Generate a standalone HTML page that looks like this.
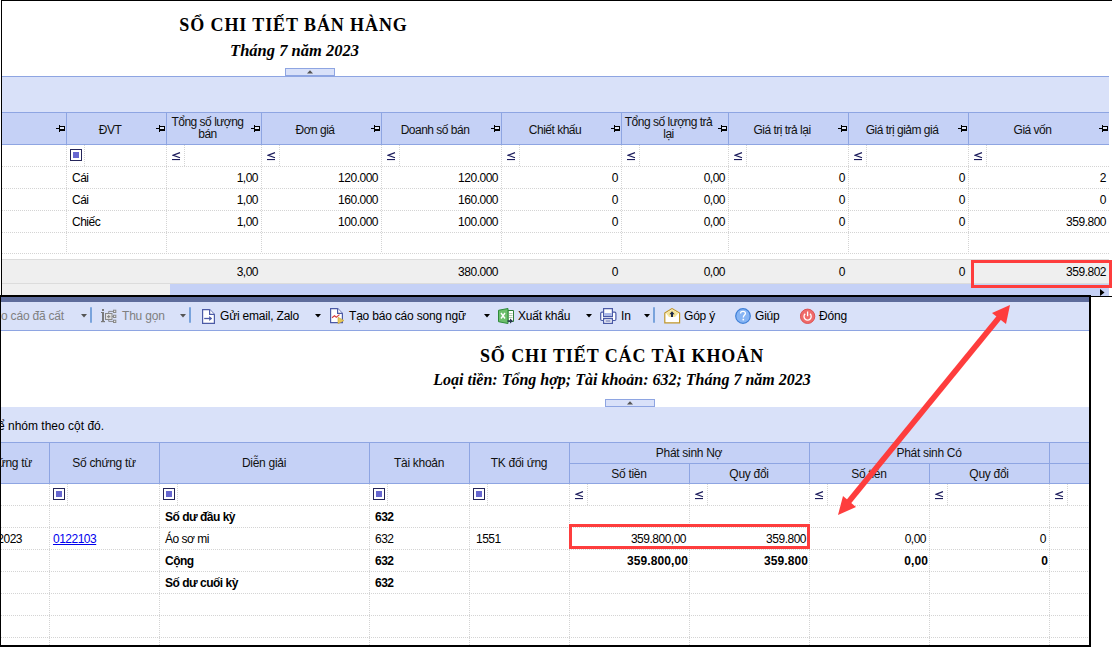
<!DOCTYPE html><html><head><meta charset="utf-8"><style>
html,body{margin:0;padding:0;}body{width:1112px;height:647px;position:relative;overflow:hidden;background:#fff;font-family:"Liberation Sans",sans-serif;}
</style></head><body>
<div style="position:absolute;left:1px;top:0px;width:1111px;height:1px;background:#000;"></div>
<div style="position:absolute;left:1px;top:0px;width:1px;height:297px;background:#000;"></div>
<div style="position:absolute;left:1px;top:296px;width:1111px;height:1px;background:#000;"></div>
<div style="position:absolute;left:0px;top:15px;white-space:nowrap;font-family:'Liberation Serif', serif;font-weight:bold;font-size:18px;letter-spacing:0.9px;color:#000;width:587px;text-align:center;">SỔ CHI TIẾT BÁN HÀNG</div>
<div style="position:absolute;left:0px;top:41px;white-space:nowrap;font-family:'Liberation Serif', serif;font-weight:bold;font-style:italic;font-size:16.5px;color:#000;width:589px;text-align:center;">Tháng 7 năm 2023</div>
<div style="position:absolute;left:285px;top:68px;width:50px;height:8px;box-sizing:border-box;border:1px solid #8ea5e2;background:#d9e1f9;"></div>
<svg style="position:absolute;left:306px;top:69px" width="8" height="5"><path d="M1 4.6L4 1.2L7 4.6Z" fill="#555"/></svg>
<div style="position:absolute;left:2px;top:76px;width:1107px;height:36px;background:#d9e1f9;border-top:1px solid #8ea5e2;box-sizing:border-box;"></div>
<div style="position:absolute;left:2px;top:112px;width:1107px;height:33px;background:#c5d1f6;border-top:1px solid #8ea5e2;border-bottom:1px solid #8ea5e2;box-sizing:border-box;"></div>
<div style="position:absolute;left:66px;top:113px;width:1px;height:31px;background:#8ea5e2;"></div>
<div style="position:absolute;left:166px;top:113px;width:1px;height:31px;background:#8ea5e2;"></div>
<div style="position:absolute;left:261px;top:113px;width:1px;height:31px;background:#8ea5e2;"></div>
<div style="position:absolute;left:381px;top:113px;width:1px;height:31px;background:#8ea5e2;"></div>
<div style="position:absolute;left:501px;top:113px;width:1px;height:31px;background:#8ea5e2;"></div>
<div style="position:absolute;left:621px;top:113px;width:1px;height:31px;background:#8ea5e2;"></div>
<div style="position:absolute;left:728px;top:113px;width:1px;height:31px;background:#8ea5e2;"></div>
<div style="position:absolute;left:848px;top:113px;width:1px;height:31px;background:#8ea5e2;"></div>
<div style="position:absolute;left:968px;top:113px;width:1px;height:31px;background:#8ea5e2;"></div>
<svg style="position:absolute;left:56px;top:124px" width="10" height="8" viewBox="0 0 10 8"><rect x="0" y="4" width="3" height="1" fill="#000"/><rect x="3" y="1" width="1" height="7" fill="#000"/><rect x="4" y="2" width="5" height="5" fill="#000"/><rect x="4" y="3" width="4" height="2" fill="#dfe6f8"/></svg>
<svg style="position:absolute;left:156px;top:124px" width="10" height="8" viewBox="0 0 10 8"><rect x="0" y="4" width="3" height="1" fill="#000"/><rect x="3" y="1" width="1" height="7" fill="#000"/><rect x="4" y="2" width="5" height="5" fill="#000"/><rect x="4" y="3" width="4" height="2" fill="#dfe6f8"/></svg>
<div style="position:absolute;left:66px;top:123px;white-space:nowrap;font-family:'Liberation Sans', sans-serif;font-size:12px;letter-spacing:-0.5px;color:#111;width:88px;text-align:center;">ĐVT</div>
<svg style="position:absolute;left:251px;top:124px" width="10" height="8" viewBox="0 0 10 8"><rect x="0" y="4" width="3" height="1" fill="#000"/><rect x="3" y="1" width="1" height="7" fill="#000"/><rect x="4" y="2" width="5" height="5" fill="#000"/><rect x="4" y="3" width="4" height="2" fill="#dfe6f8"/></svg>
<div style="position:absolute;left:166px;top:116px;white-space:nowrap;font-family:'Liberation Sans', sans-serif;font-size:12px;letter-spacing:-0.5px;color:#111;line-height:12px;width:83px;text-align:center;">Tổng số lượng<br>bán</div>
<svg style="position:absolute;left:371px;top:124px" width="10" height="8" viewBox="0 0 10 8"><rect x="0" y="4" width="3" height="1" fill="#000"/><rect x="3" y="1" width="1" height="7" fill="#000"/><rect x="4" y="2" width="5" height="5" fill="#000"/><rect x="4" y="3" width="4" height="2" fill="#dfe6f8"/></svg>
<div style="position:absolute;left:261px;top:123px;white-space:nowrap;font-family:'Liberation Sans', sans-serif;font-size:12px;letter-spacing:-0.5px;color:#111;width:108px;text-align:center;">Đơn giá</div>
<svg style="position:absolute;left:491px;top:124px" width="10" height="8" viewBox="0 0 10 8"><rect x="0" y="4" width="3" height="1" fill="#000"/><rect x="3" y="1" width="1" height="7" fill="#000"/><rect x="4" y="2" width="5" height="5" fill="#000"/><rect x="4" y="3" width="4" height="2" fill="#dfe6f8"/></svg>
<div style="position:absolute;left:381px;top:123px;white-space:nowrap;font-family:'Liberation Sans', sans-serif;font-size:12px;letter-spacing:-0.5px;color:#111;width:108px;text-align:center;">Doanh số bán</div>
<svg style="position:absolute;left:611px;top:124px" width="10" height="8" viewBox="0 0 10 8"><rect x="0" y="4" width="3" height="1" fill="#000"/><rect x="3" y="1" width="1" height="7" fill="#000"/><rect x="4" y="2" width="5" height="5" fill="#000"/><rect x="4" y="3" width="4" height="2" fill="#dfe6f8"/></svg>
<div style="position:absolute;left:501px;top:123px;white-space:nowrap;font-family:'Liberation Sans', sans-serif;font-size:12px;letter-spacing:-0.5px;color:#111;width:108px;text-align:center;">Chiết khấu</div>
<svg style="position:absolute;left:718px;top:124px" width="10" height="8" viewBox="0 0 10 8"><rect x="0" y="4" width="3" height="1" fill="#000"/><rect x="3" y="1" width="1" height="7" fill="#000"/><rect x="4" y="2" width="5" height="5" fill="#000"/><rect x="4" y="3" width="4" height="2" fill="#dfe6f8"/></svg>
<div style="position:absolute;left:621px;top:116px;white-space:nowrap;font-family:'Liberation Sans', sans-serif;font-size:12px;letter-spacing:-0.5px;color:#111;line-height:12px;width:95px;text-align:center;">Tổng số lượng trả<br>lại</div>
<svg style="position:absolute;left:838px;top:124px" width="10" height="8" viewBox="0 0 10 8"><rect x="0" y="4" width="3" height="1" fill="#000"/><rect x="3" y="1" width="1" height="7" fill="#000"/><rect x="4" y="2" width="5" height="5" fill="#000"/><rect x="4" y="3" width="4" height="2" fill="#dfe6f8"/></svg>
<div style="position:absolute;left:728px;top:123px;white-space:nowrap;font-family:'Liberation Sans', sans-serif;font-size:12px;letter-spacing:-0.5px;color:#111;width:108px;text-align:center;">Giá trị trả lại</div>
<svg style="position:absolute;left:958px;top:124px" width="10" height="8" viewBox="0 0 10 8"><rect x="0" y="4" width="3" height="1" fill="#000"/><rect x="3" y="1" width="1" height="7" fill="#000"/><rect x="4" y="2" width="5" height="5" fill="#000"/><rect x="4" y="3" width="4" height="2" fill="#dfe6f8"/></svg>
<div style="position:absolute;left:848px;top:123px;white-space:nowrap;font-family:'Liberation Sans', sans-serif;font-size:12px;letter-spacing:-0.5px;color:#111;width:108px;text-align:center;">Giá trị giảm giá</div>
<svg style="position:absolute;left:1099px;top:124px" width="10" height="8" viewBox="0 0 10 8"><rect x="0" y="4" width="3" height="1" fill="#000"/><rect x="3" y="1" width="1" height="7" fill="#000"/><rect x="4" y="2" width="5" height="5" fill="#000"/><rect x="4" y="3" width="4" height="2" fill="#dfe6f8"/></svg>
<div style="position:absolute;left:968px;top:123px;white-space:nowrap;font-family:'Liberation Sans', sans-serif;font-size:12px;letter-spacing:-0.5px;color:#111;width:129px;text-align:center;">Giá vốn</div>
<div style="position:absolute;left:66px;top:145px;width:1px;height:108px;background:repeating-linear-gradient(to bottom,#d4d4d4 0 1px,transparent 1px 2px);"></div>
<div style="position:absolute;left:166px;top:145px;width:1px;height:108px;background:repeating-linear-gradient(to bottom,#d4d4d4 0 1px,transparent 1px 2px);"></div>
<div style="position:absolute;left:261px;top:145px;width:1px;height:108px;background:repeating-linear-gradient(to bottom,#d4d4d4 0 1px,transparent 1px 2px);"></div>
<div style="position:absolute;left:381px;top:145px;width:1px;height:108px;background:repeating-linear-gradient(to bottom,#d4d4d4 0 1px,transparent 1px 2px);"></div>
<div style="position:absolute;left:501px;top:145px;width:1px;height:108px;background:repeating-linear-gradient(to bottom,#d4d4d4 0 1px,transparent 1px 2px);"></div>
<div style="position:absolute;left:621px;top:145px;width:1px;height:108px;background:repeating-linear-gradient(to bottom,#d4d4d4 0 1px,transparent 1px 2px);"></div>
<div style="position:absolute;left:728px;top:145px;width:1px;height:108px;background:repeating-linear-gradient(to bottom,#d4d4d4 0 1px,transparent 1px 2px);"></div>
<div style="position:absolute;left:848px;top:145px;width:1px;height:108px;background:repeating-linear-gradient(to bottom,#d4d4d4 0 1px,transparent 1px 2px);"></div>
<div style="position:absolute;left:968px;top:145px;width:1px;height:108px;background:repeating-linear-gradient(to bottom,#d4d4d4 0 1px,transparent 1px 2px);"></div>
<div style="position:absolute;left:2px;top:166px;width:1107px;height:1px;background:repeating-linear-gradient(to right,#d4d4d4 0 1px,transparent 1px 2px);"></div>
<div style="position:absolute;left:2px;top:188px;width:1107px;height:1px;background:repeating-linear-gradient(to right,#d4d4d4 0 1px,transparent 1px 2px);"></div>
<div style="position:absolute;left:2px;top:210px;width:1107px;height:1px;background:repeating-linear-gradient(to right,#d4d4d4 0 1px,transparent 1px 2px);"></div>
<div style="position:absolute;left:2px;top:232px;width:1107px;height:1px;background:repeating-linear-gradient(to right,#d4d4d4 0 1px,transparent 1px 2px);"></div>
<div style="position:absolute;left:2px;top:253px;width:1107px;height:1px;background:repeating-linear-gradient(to right,#d4d4d4 0 1px,transparent 1px 2px);"></div>
<div style="position:absolute;left:70px;top:149px;width:12px;height:12px;box-sizing:border-box;border:1px solid #25255a;background:#fff;"></div>
<div style="position:absolute;left:73px;top:152px;width:6px;height:6px;background:#6767d0;"></div>
<div style="position:absolute;left:84px;top:145px;width:1px;height:21px;background:repeating-linear-gradient(to bottom,#d4d4d4 0 1px,transparent 1px 2px);"></div>
<svg style="position:absolute;left:172px;top:152px" width="9" height="9" viewBox="0 0 9 9"><path d="M8 0.6L1.2 3.2L8 5.8" fill="none" stroke="#1c1c5c" stroke-width="1.2"/><rect x="0" y="7" width="8" height="1.1" fill="#1c1c5c"/></svg>
<div style="position:absolute;left:184px;top:145px;width:1px;height:21px;background:repeating-linear-gradient(to bottom,#d4d4d4 0 1px,transparent 1px 2px);"></div>
<svg style="position:absolute;left:267px;top:152px" width="9" height="9" viewBox="0 0 9 9"><path d="M8 0.6L1.2 3.2L8 5.8" fill="none" stroke="#1c1c5c" stroke-width="1.2"/><rect x="0" y="7" width="8" height="1.1" fill="#1c1c5c"/></svg>
<div style="position:absolute;left:279px;top:145px;width:1px;height:21px;background:repeating-linear-gradient(to bottom,#d4d4d4 0 1px,transparent 1px 2px);"></div>
<svg style="position:absolute;left:387px;top:152px" width="9" height="9" viewBox="0 0 9 9"><path d="M8 0.6L1.2 3.2L8 5.8" fill="none" stroke="#1c1c5c" stroke-width="1.2"/><rect x="0" y="7" width="8" height="1.1" fill="#1c1c5c"/></svg>
<div style="position:absolute;left:399px;top:145px;width:1px;height:21px;background:repeating-linear-gradient(to bottom,#d4d4d4 0 1px,transparent 1px 2px);"></div>
<svg style="position:absolute;left:507px;top:152px" width="9" height="9" viewBox="0 0 9 9"><path d="M8 0.6L1.2 3.2L8 5.8" fill="none" stroke="#1c1c5c" stroke-width="1.2"/><rect x="0" y="7" width="8" height="1.1" fill="#1c1c5c"/></svg>
<div style="position:absolute;left:519px;top:145px;width:1px;height:21px;background:repeating-linear-gradient(to bottom,#d4d4d4 0 1px,transparent 1px 2px);"></div>
<svg style="position:absolute;left:627px;top:152px" width="9" height="9" viewBox="0 0 9 9"><path d="M8 0.6L1.2 3.2L8 5.8" fill="none" stroke="#1c1c5c" stroke-width="1.2"/><rect x="0" y="7" width="8" height="1.1" fill="#1c1c5c"/></svg>
<div style="position:absolute;left:639px;top:145px;width:1px;height:21px;background:repeating-linear-gradient(to bottom,#d4d4d4 0 1px,transparent 1px 2px);"></div>
<svg style="position:absolute;left:734px;top:152px" width="9" height="9" viewBox="0 0 9 9"><path d="M8 0.6L1.2 3.2L8 5.8" fill="none" stroke="#1c1c5c" stroke-width="1.2"/><rect x="0" y="7" width="8" height="1.1" fill="#1c1c5c"/></svg>
<div style="position:absolute;left:746px;top:145px;width:1px;height:21px;background:repeating-linear-gradient(to bottom,#d4d4d4 0 1px,transparent 1px 2px);"></div>
<svg style="position:absolute;left:854px;top:152px" width="9" height="9" viewBox="0 0 9 9"><path d="M8 0.6L1.2 3.2L8 5.8" fill="none" stroke="#1c1c5c" stroke-width="1.2"/><rect x="0" y="7" width="8" height="1.1" fill="#1c1c5c"/></svg>
<div style="position:absolute;left:866px;top:145px;width:1px;height:21px;background:repeating-linear-gradient(to bottom,#d4d4d4 0 1px,transparent 1px 2px);"></div>
<svg style="position:absolute;left:974px;top:152px" width="9" height="9" viewBox="0 0 9 9"><path d="M8 0.6L1.2 3.2L8 5.8" fill="none" stroke="#1c1c5c" stroke-width="1.2"/><rect x="0" y="7" width="8" height="1.1" fill="#1c1c5c"/></svg>
<div style="position:absolute;left:986px;top:145px;width:1px;height:21px;background:repeating-linear-gradient(to bottom,#d4d4d4 0 1px,transparent 1px 2px);"></div>
<div style="position:absolute;left:72px;top:171px;white-space:nowrap;font-family:'Liberation Sans', sans-serif;font-size:12px;letter-spacing:-0.5px;color:#000;">Cái</div>
<div style="position:absolute;left:166px;top:171px;white-space:nowrap;font-family:'Liberation Sans', sans-serif;font-size:12px;letter-spacing:-0.5px;color:#000;width:92px;text-align:right;">1,00</div>
<div style="position:absolute;left:261px;top:171px;white-space:nowrap;font-family:'Liberation Sans', sans-serif;font-size:12px;letter-spacing:-0.5px;color:#000;width:117px;text-align:right;">120.000</div>
<div style="position:absolute;left:381px;top:171px;white-space:nowrap;font-family:'Liberation Sans', sans-serif;font-size:12px;letter-spacing:-0.5px;color:#000;width:117px;text-align:right;">120.000</div>
<div style="position:absolute;left:501px;top:171px;white-space:nowrap;font-family:'Liberation Sans', sans-serif;font-size:12px;letter-spacing:-0.5px;color:#000;width:117px;text-align:right;">0</div>
<div style="position:absolute;left:621px;top:171px;white-space:nowrap;font-family:'Liberation Sans', sans-serif;font-size:12px;letter-spacing:-0.5px;color:#000;width:104px;text-align:right;">0,00</div>
<div style="position:absolute;left:728px;top:171px;white-space:nowrap;font-family:'Liberation Sans', sans-serif;font-size:12px;letter-spacing:-0.5px;color:#000;width:117px;text-align:right;">0</div>
<div style="position:absolute;left:848px;top:171px;white-space:nowrap;font-family:'Liberation Sans', sans-serif;font-size:12px;letter-spacing:-0.5px;color:#000;width:117px;text-align:right;">0</div>
<div style="position:absolute;left:968px;top:171px;white-space:nowrap;font-family:'Liberation Sans', sans-serif;font-size:12px;letter-spacing:-0.5px;color:#000;width:138px;text-align:right;">2</div>
<div style="position:absolute;left:72px;top:193px;white-space:nowrap;font-family:'Liberation Sans', sans-serif;font-size:12px;letter-spacing:-0.5px;color:#000;">Cái</div>
<div style="position:absolute;left:166px;top:193px;white-space:nowrap;font-family:'Liberation Sans', sans-serif;font-size:12px;letter-spacing:-0.5px;color:#000;width:92px;text-align:right;">1,00</div>
<div style="position:absolute;left:261px;top:193px;white-space:nowrap;font-family:'Liberation Sans', sans-serif;font-size:12px;letter-spacing:-0.5px;color:#000;width:117px;text-align:right;">160.000</div>
<div style="position:absolute;left:381px;top:193px;white-space:nowrap;font-family:'Liberation Sans', sans-serif;font-size:12px;letter-spacing:-0.5px;color:#000;width:117px;text-align:right;">160.000</div>
<div style="position:absolute;left:501px;top:193px;white-space:nowrap;font-family:'Liberation Sans', sans-serif;font-size:12px;letter-spacing:-0.5px;color:#000;width:117px;text-align:right;">0</div>
<div style="position:absolute;left:621px;top:193px;white-space:nowrap;font-family:'Liberation Sans', sans-serif;font-size:12px;letter-spacing:-0.5px;color:#000;width:104px;text-align:right;">0,00</div>
<div style="position:absolute;left:728px;top:193px;white-space:nowrap;font-family:'Liberation Sans', sans-serif;font-size:12px;letter-spacing:-0.5px;color:#000;width:117px;text-align:right;">0</div>
<div style="position:absolute;left:848px;top:193px;white-space:nowrap;font-family:'Liberation Sans', sans-serif;font-size:12px;letter-spacing:-0.5px;color:#000;width:117px;text-align:right;">0</div>
<div style="position:absolute;left:968px;top:193px;white-space:nowrap;font-family:'Liberation Sans', sans-serif;font-size:12px;letter-spacing:-0.5px;color:#000;width:138px;text-align:right;">0</div>
<div style="position:absolute;left:72px;top:215px;white-space:nowrap;font-family:'Liberation Sans', sans-serif;font-size:12px;letter-spacing:-0.5px;color:#000;">Chiếc</div>
<div style="position:absolute;left:166px;top:215px;white-space:nowrap;font-family:'Liberation Sans', sans-serif;font-size:12px;letter-spacing:-0.5px;color:#000;width:92px;text-align:right;">1,00</div>
<div style="position:absolute;left:261px;top:215px;white-space:nowrap;font-family:'Liberation Sans', sans-serif;font-size:12px;letter-spacing:-0.5px;color:#000;width:117px;text-align:right;">100.000</div>
<div style="position:absolute;left:381px;top:215px;white-space:nowrap;font-family:'Liberation Sans', sans-serif;font-size:12px;letter-spacing:-0.5px;color:#000;width:117px;text-align:right;">100.000</div>
<div style="position:absolute;left:501px;top:215px;white-space:nowrap;font-family:'Liberation Sans', sans-serif;font-size:12px;letter-spacing:-0.5px;color:#000;width:117px;text-align:right;">0</div>
<div style="position:absolute;left:621px;top:215px;white-space:nowrap;font-family:'Liberation Sans', sans-serif;font-size:12px;letter-spacing:-0.5px;color:#000;width:104px;text-align:right;">0,00</div>
<div style="position:absolute;left:728px;top:215px;white-space:nowrap;font-family:'Liberation Sans', sans-serif;font-size:12px;letter-spacing:-0.5px;color:#000;width:117px;text-align:right;">0</div>
<div style="position:absolute;left:848px;top:215px;white-space:nowrap;font-family:'Liberation Sans', sans-serif;font-size:12px;letter-spacing:-0.5px;color:#000;width:117px;text-align:right;">0</div>
<div style="position:absolute;left:968px;top:215px;white-space:nowrap;font-family:'Liberation Sans', sans-serif;font-size:12px;letter-spacing:-0.5px;color:#000;width:138px;text-align:right;">359.800</div>
<div style="position:absolute;left:2px;top:259px;width:1107px;height:25px;background:#efefef;border-top:1px solid #dcdcdc;border-bottom:1px solid #dcdcdc;box-sizing:border-box;"></div>
<div style="position:absolute;left:166px;top:265px;white-space:nowrap;font-family:'Liberation Sans', sans-serif;font-size:12px;letter-spacing:-0.5px;color:#000;width:92px;text-align:right;">3,00</div>
<div style="position:absolute;left:381px;top:265px;white-space:nowrap;font-family:'Liberation Sans', sans-serif;font-size:12px;letter-spacing:-0.5px;color:#000;width:117px;text-align:right;">380.000</div>
<div style="position:absolute;left:501px;top:265px;white-space:nowrap;font-family:'Liberation Sans', sans-serif;font-size:12px;letter-spacing:-0.5px;color:#000;width:117px;text-align:right;">0</div>
<div style="position:absolute;left:621px;top:265px;white-space:nowrap;font-family:'Liberation Sans', sans-serif;font-size:12px;letter-spacing:-0.5px;color:#000;width:104px;text-align:right;">0,00</div>
<div style="position:absolute;left:728px;top:265px;white-space:nowrap;font-family:'Liberation Sans', sans-serif;font-size:12px;letter-spacing:-0.5px;color:#000;width:117px;text-align:right;">0</div>
<div style="position:absolute;left:848px;top:265px;white-space:nowrap;font-family:'Liberation Sans', sans-serif;font-size:12px;letter-spacing:-0.5px;color:#000;width:117px;text-align:right;">0</div>
<div style="position:absolute;left:968px;top:265px;white-space:nowrap;font-family:'Liberation Sans', sans-serif;font-size:12px;letter-spacing:-0.5px;color:#000;width:138px;text-align:right;">359.802</div>
<div style="position:absolute;left:2px;top:284px;width:168px;height:11px;background:#f0f0f0;"></div>
<div style="position:absolute;left:170px;top:284px;width:939px;height:11px;background:#c5d1f6;"></div>
<div style="position:absolute;left:1109px;top:284px;width:3px;height:12px;background:#fff;"></div>
<div style="position:absolute;left:1090px;top:284px;width:19px;height:12px;background:#c5d1f6;"></div>
<svg style="position:absolute;left:1100px;top:289px" width="5" height="7"><path d="M0 0L4.5 3.5L0 7Z" fill="#000"/></svg>
<div style="position:absolute;left:971px;top:260px;width:141px;height:28px;box-sizing:border-box;border:3px solid #fe3d3d;"></div>
<div style="position:absolute;left:0px;top:295px;width:1091px;height:352px;background:#fff;"></div>
<div style="position:absolute;left:0px;top:295px;width:1091px;height:2px;background:#000;"></div>
<div style="position:absolute;left:0px;top:295px;width:1px;height:352px;background:#000;"></div>
<div style="position:absolute;left:1089px;top:295px;width:2px;height:352px;background:#000;"></div>
<div style="position:absolute;left:0px;top:645px;width:1091px;height:2px;background:#000;"></div>
<div style="position:absolute;left:1px;top:297px;width:1088px;height:5px;background:#5e6c9c;"></div>
<div style="position:absolute;left:1px;top:302px;width:1088px;height:29px;background:#d9e1f9;border-bottom:1px solid #8ea5e2;box-sizing:border-box;"></div>
<div style="position:absolute;left:1px;top:309px;white-space:nowrap;font-family:'Liberation Sans', sans-serif;font-size:12px;letter-spacing:-0.2px;color:#7f7f7f;">o cáo đã cất</div>
<svg style="position:absolute;left:81px;top:314px" width="6" height="4"><path d="M0 0H6L3 3.5Z" fill="#555"/></svg>
<div style="position:absolute;left:90px;top:307px;width:2px;height:16px;background:#79a3dc;border-radius:1px;"></div>
<svg style="position:absolute;left:100px;top:308px" width="17" height="16" viewBox="0 0 17 16"><rect x="2" y="1" width="2" height="2" fill="#7a7a7a"/><rect x="2" y="4" width="2" height="10" fill="#7a7a7a"/><rect x="1" y="4" width="3" height="1" fill="#7a7a7a"/><rect x="1" y="13" width="4" height="1.2" fill="#7a7a7a"/><rect x="5.5" y="5.5" width="6.5" height="6" fill="#e2e2e2" stroke="#888" stroke-width="1"/><path d="M8.7 7V10.2M7.1 8.6H10.3" stroke="#888" stroke-width="1.1"/><path d="M8.7 5.5V3.4H13.5M12 8.4H13.5M8.7 11.5V13.4H13.5" stroke="#8a8a8a" stroke-width="1" fill="none"/><rect x="13.5" y="2.2" width="2.3" height="2.3" fill="#e8e8e8" stroke="#888" stroke-width="1"/><rect x="13.5" y="7.2" width="2.3" height="2.3" fill="#e8e8e8" stroke="#888" stroke-width="1"/><rect x="13.5" y="12.2" width="2.3" height="2.3" fill="#e8e8e8" stroke="#888" stroke-width="1"/></svg>
<div style="position:absolute;left:122px;top:309px;white-space:nowrap;font-family:'Liberation Sans', sans-serif;font-size:12px;letter-spacing:-0.2px;color:#7f7f7f;">Thu gọn</div>
<svg style="position:absolute;left:180px;top:314px" width="6" height="4"><path d="M0 0H6L3 3.5Z" fill="#555"/></svg>
<div style="position:absolute;left:189px;top:307px;width:2px;height:16px;background:#79a3dc;border-radius:1px;"></div>
<svg style="position:absolute;left:202px;top:309px" width="13" height="15" viewBox="0 0 13 15"><path d="M0.6 0.6H7.6L12.4 5.4V14.4H0.6Z" fill="#fff" stroke="#4b5aa6" stroke-width="1.2"/><path d="M7.6 0.6V5.4H12.4" fill="#fff" stroke="#4b5aa6" stroke-width="1.2"/><path d="M2.2 9.5H8.5" stroke="#4b5aa6" stroke-width="1.3"/><path d="M7.2 7L10.2 9.5L7.2 12Z" fill="#4b5aa6"/></svg>
<div style="position:absolute;left:220px;top:309px;white-space:nowrap;font-family:'Liberation Sans', sans-serif;font-size:12px;letter-spacing:-0.2px;color:#000;">Gửi email, Zalo</div>
<svg style="position:absolute;left:315px;top:314px" width="6" height="4"><path d="M0 0H6L3 3.5Z" fill="#000"/></svg>
<svg style="position:absolute;left:330px;top:308px" width="15" height="16" viewBox="0 0 15 16"><path d="M0.6 0.6H7.6L12.4 5.4V14.6H0.6Z" fill="#fff" stroke="#4b5aa6" stroke-width="1.2"/><path d="M7.6 0.6V5.4H12.4" fill="#fff" stroke="#4b5aa6" stroke-width="1.2"/><path d="M2 9.8L4.5 7.8L6.3 9.2L9.5 6.6" stroke="#d84040" stroke-width="1.1" fill="none"/><path d="M8 9.3L14 12.5L8 15.8Z" fill="#e6c85a" stroke="#c9a43a" stroke-width="0.6"/></svg>
<div style="position:absolute;left:349px;top:309px;white-space:nowrap;font-family:'Liberation Sans', sans-serif;font-size:12px;letter-spacing:-0.2px;color:#000;">Tạo báo cáo song ngữ</div>
<svg style="position:absolute;left:484px;top:314px" width="6" height="4"><path d="M0 0H6L3 3.5Z" fill="#000"/></svg>
<svg style="position:absolute;left:498px;top:308px" width="17" height="16" viewBox="0 0 17 16"><path d="M10 2.5H15.5V13.5H10Z" fill="#fff" stroke="#2e7d3a" stroke-width="1"/><path d="M11 5.5H14.5M11 7.5H14.5M11 9.5H14.5" stroke="#a9c4a9" stroke-width="0.9"/><path d="M0.5 2.3L10 0.5V15.5L0.5 13.7Z" fill="#6cbf6c" stroke="#2f8a3a" stroke-width="1"/><path d="M3 5L7 10.5M7 5L3 10.5" stroke="#fff" stroke-width="1.4"/><path d="M9.5 13H12.5" stroke="#2a3850" stroke-width="1.6"/><path d="M12 10.5L15 13L12 15.5Z" fill="#2a3850"/></svg>
<div style="position:absolute;left:518px;top:309px;white-space:nowrap;font-family:'Liberation Sans', sans-serif;font-size:12px;letter-spacing:-0.2px;color:#000;">Xuất khẩu</div>
<svg style="position:absolute;left:586px;top:314px" width="6" height="4"><path d="M0 0H6L3 3.5Z" fill="#000"/></svg>
<svg style="position:absolute;left:600px;top:308px" width="17" height="16" viewBox="0 0 17 16"><rect x="0.7" y="4.2" width="15.2" height="8.3" rx="1.2" fill="#fff" stroke="#4b5aa6" stroke-width="1.2"/><path d="M3.6 0.6H12.4V8.6H3.6Z" fill="#fff" stroke="#4b5aa6" stroke-width="1.2"/><rect x="4.2" y="5" width="7.6" height="3" fill="#aab8e8"/><path d="M3.6 10.6H12.4V15.4H3.6Z" fill="#fff" stroke="#4b5aa6" stroke-width="1.2"/><path d="M5.5 13H10.5" stroke="#4b5aa6" stroke-width="1"/></svg>
<div style="position:absolute;left:621px;top:309px;white-space:nowrap;font-family:'Liberation Sans', sans-serif;font-size:12px;letter-spacing:-0.2px;color:#000;">In</div>
<svg style="position:absolute;left:644px;top:314px" width="6" height="4"><path d="M0 0H6L3 3.5Z" fill="#000"/></svg>
<div style="position:absolute;left:653px;top:307px;width:2px;height:16px;background:#79a3dc;border-radius:1px;"></div>
<svg style="position:absolute;left:664px;top:308px" width="17" height="16" viewBox="0 0 17 16"><path d="M0.8 5L8 0.6L15.6 5V14.9H0.8Z" fill="#fff" stroke="#c0962a" stroke-width="1.2"/><path d="M2 5.2L8 1.5L14.5 5.2L11 9H5Z" fill="#f6e59a"/><path d="M8 3.2L10.6 6.2H9V9H7V6.2H5.4Z" fill="#1e2a48"/></svg>
<div style="position:absolute;left:684px;top:309px;white-space:nowrap;font-family:'Liberation Sans', sans-serif;font-size:12px;letter-spacing:-0.2px;color:#000;">Góp ý</div>
<svg style="position:absolute;left:735px;top:308px" width="16" height="16" viewBox="0 0 16 16"><circle cx="8" cy="8" r="7.3" fill="#86b4f4" stroke="#3f7fd6" stroke-width="1.2"/><path d="M5.6 5.6C5.6 4 6.6 3.3 8 3.3C9.5 3.3 10.4 4.2 10.4 5.4C10.4 6.9 8.3 7.3 8.3 9.4" stroke="#fff" stroke-width="1.3" fill="none"/><rect x="7.5" y="10.8" width="1.6" height="1.6" fill="#fff"/></svg>
<div style="position:absolute;left:755px;top:309px;white-space:nowrap;font-family:'Liberation Sans', sans-serif;font-size:12px;letter-spacing:-0.2px;color:#000;">Giúp</div>
<svg style="position:absolute;left:800px;top:308px" width="16" height="16" viewBox="0 0 16 16"><circle cx="7.6" cy="8.3" r="7.2" fill="#ef6a6a" stroke="#d94c4c" stroke-width="0.9"/><path d="M5.2 5.8A3.6 3.6 0 1 0 10 5.8" stroke="#fff" stroke-width="1.3" fill="none"/><path d="M7.6 3.5V8.2" stroke="#fff" stroke-width="1.3"/></svg>
<div style="position:absolute;left:819px;top:309px;white-space:nowrap;font-family:'Liberation Sans', sans-serif;font-size:12px;letter-spacing:-0.2px;color:#000;">Đóng</div>
<div style="position:absolute;left:0px;top:346px;white-space:nowrap;font-family:'Liberation Serif', serif;font-weight:bold;font-size:18px;letter-spacing:0.9px;color:#000;width:1244px;text-align:center;">SỔ CHI TIẾT CÁC TÀI KHOẢN</div>
<div style="position:absolute;left:0px;top:371px;white-space:nowrap;font-family:'Liberation Serif', serif;font-weight:bold;font-style:italic;font-size:16px;color:#000;width:1244px;text-align:center;">Loại tiền: Tổng hợp; Tài khoản: 632; Tháng 7 năm 2023</div>
<div style="position:absolute;left:605px;top:399px;width:50px;height:8px;box-sizing:border-box;border:1px solid #8ea5e2;background:#d9e1f9;"></div>
<svg style="position:absolute;left:626px;top:400px" width="8" height="5"><path d="M1 4.6L4 1.2L7 4.6Z" fill="#555"/></svg>
<div style="position:absolute;left:1px;top:407px;width:1088px;height:35px;background:#d9e1f9;"></div>
<div style="position:absolute;left:-2px;top:419px;white-space:nowrap;font-family:'Liberation Sans', sans-serif;font-size:12px;color:#000;">ể nhóm theo cột đó.</div>
<div style="position:absolute;left:1px;top:442px;width:1088px;height:42px;background:#c5d1f6;border-top:1px solid #8ea5e2;border-bottom:1px solid #8ea5e2;box-sizing:border-box;"></div>
<div style="position:absolute;left:49px;top:443px;width:1px;height:40px;background:#8ea5e2;"></div>
<div style="position:absolute;left:159px;top:443px;width:1px;height:40px;background:#8ea5e2;"></div>
<div style="position:absolute;left:369px;top:443px;width:1px;height:40px;background:#8ea5e2;"></div>
<div style="position:absolute;left:469px;top:443px;width:1px;height:40px;background:#8ea5e2;"></div>
<div style="position:absolute;left:569px;top:443px;width:1px;height:40px;background:#8ea5e2;"></div>
<div style="position:absolute;left:689px;top:464px;width:1px;height:19px;background:#8ea5e2;"></div>
<div style="position:absolute;left:809px;top:443px;width:1px;height:40px;background:#8ea5e2;"></div>
<div style="position:absolute;left:929px;top:464px;width:1px;height:19px;background:#8ea5e2;"></div>
<div style="position:absolute;left:1049px;top:443px;width:1px;height:40px;background:#8ea5e2;"></div>
<div style="position:absolute;left:569px;top:463px;width:520px;height:1px;background:#8ea5e2;"></div>
<div style="position:absolute;left:-18px;top:456px;white-space:nowrap;font-family:'Liberation Sans', sans-serif;font-size:12px;letter-spacing:-0.3px;color:#111;width:50px;text-align:right;">ứng từ</div>
<div style="position:absolute;left:49px;top:456px;white-space:nowrap;font-family:'Liberation Sans', sans-serif;font-size:12px;letter-spacing:-0.3px;color:#111;width:110px;text-align:center;">Số chứng từ</div>
<div style="position:absolute;left:159px;top:456px;white-space:nowrap;font-family:'Liberation Sans', sans-serif;font-size:12px;letter-spacing:-0.3px;color:#111;width:210px;text-align:center;">Diễn giải</div>
<div style="position:absolute;left:369px;top:456px;white-space:nowrap;font-family:'Liberation Sans', sans-serif;font-size:12px;letter-spacing:-0.3px;color:#111;width:100px;text-align:center;">Tài khoản</div>
<div style="position:absolute;left:469px;top:456px;white-space:nowrap;font-family:'Liberation Sans', sans-serif;font-size:12px;letter-spacing:-0.3px;color:#111;width:100px;text-align:center;">TK đối ứng</div>
<div style="position:absolute;left:569px;top:446px;white-space:nowrap;font-family:'Liberation Sans', sans-serif;font-size:12px;letter-spacing:-0.3px;color:#111;width:240px;text-align:center;">Phát sinh Nợ</div>
<div style="position:absolute;left:809px;top:446px;white-space:nowrap;font-family:'Liberation Sans', sans-serif;font-size:12px;letter-spacing:-0.3px;color:#111;width:240px;text-align:center;">Phát sinh Có</div>
<div style="position:absolute;left:569px;top:467px;white-space:nowrap;font-family:'Liberation Sans', sans-serif;font-size:12px;letter-spacing:-0.3px;color:#111;width:120px;text-align:center;">Số tiền</div>
<div style="position:absolute;left:689px;top:467px;white-space:nowrap;font-family:'Liberation Sans', sans-serif;font-size:12px;letter-spacing:-0.3px;color:#111;width:120px;text-align:center;">Quy đổi</div>
<div style="position:absolute;left:809px;top:467px;white-space:nowrap;font-family:'Liberation Sans', sans-serif;font-size:12px;letter-spacing:-0.3px;color:#111;width:120px;text-align:center;">Số tiền</div>
<div style="position:absolute;left:929px;top:467px;white-space:nowrap;font-family:'Liberation Sans', sans-serif;font-size:12px;letter-spacing:-0.3px;color:#111;width:120px;text-align:center;">Quy đổi</div>
<div style="position:absolute;left:49px;top:484px;width:1px;height:161px;background:repeating-linear-gradient(to bottom,#d4d4d4 0 1px,transparent 1px 2px);"></div>
<div style="position:absolute;left:159px;top:484px;width:1px;height:161px;background:repeating-linear-gradient(to bottom,#d4d4d4 0 1px,transparent 1px 2px);"></div>
<div style="position:absolute;left:369px;top:484px;width:1px;height:161px;background:repeating-linear-gradient(to bottom,#d4d4d4 0 1px,transparent 1px 2px);"></div>
<div style="position:absolute;left:469px;top:484px;width:1px;height:161px;background:repeating-linear-gradient(to bottom,#d4d4d4 0 1px,transparent 1px 2px);"></div>
<div style="position:absolute;left:569px;top:484px;width:1px;height:161px;background:repeating-linear-gradient(to bottom,#d4d4d4 0 1px,transparent 1px 2px);"></div>
<div style="position:absolute;left:689px;top:484px;width:1px;height:161px;background:repeating-linear-gradient(to bottom,#d4d4d4 0 1px,transparent 1px 2px);"></div>
<div style="position:absolute;left:809px;top:484px;width:1px;height:161px;background:repeating-linear-gradient(to bottom,#d4d4d4 0 1px,transparent 1px 2px);"></div>
<div style="position:absolute;left:929px;top:484px;width:1px;height:161px;background:repeating-linear-gradient(to bottom,#d4d4d4 0 1px,transparent 1px 2px);"></div>
<div style="position:absolute;left:1049px;top:484px;width:1px;height:161px;background:repeating-linear-gradient(to bottom,#d4d4d4 0 1px,transparent 1px 2px);"></div>
<div style="position:absolute;left:1px;top:505px;width:1088px;height:1px;background:repeating-linear-gradient(to right,#d4d4d4 0 1px,transparent 1px 2px);"></div>
<div style="position:absolute;left:1px;top:527px;width:1088px;height:1px;background:repeating-linear-gradient(to right,#d4d4d4 0 1px,transparent 1px 2px);"></div>
<div style="position:absolute;left:1px;top:549px;width:1088px;height:1px;background:repeating-linear-gradient(to right,#d4d4d4 0 1px,transparent 1px 2px);"></div>
<div style="position:absolute;left:1px;top:571px;width:1088px;height:1px;background:repeating-linear-gradient(to right,#d4d4d4 0 1px,transparent 1px 2px);"></div>
<div style="position:absolute;left:1px;top:593px;width:1088px;height:1px;background:repeating-linear-gradient(to right,#d4d4d4 0 1px,transparent 1px 2px);"></div>
<div style="position:absolute;left:1px;top:615px;width:1088px;height:1px;background:repeating-linear-gradient(to right,#d4d4d4 0 1px,transparent 1px 2px);"></div>
<div style="position:absolute;left:1px;top:637px;width:1088px;height:1px;background:repeating-linear-gradient(to right,#d4d4d4 0 1px,transparent 1px 2px);"></div>
<div style="position:absolute;left:53px;top:488px;width:12px;height:12px;box-sizing:border-box;border:1px solid #25255a;background:#fff;"></div>
<div style="position:absolute;left:56px;top:491px;width:6px;height:6px;background:#6767d0;"></div>
<div style="position:absolute;left:67px;top:484px;width:1px;height:21px;background:repeating-linear-gradient(to bottom,#d4d4d4 0 1px,transparent 1px 2px);"></div>
<div style="position:absolute;left:163px;top:488px;width:12px;height:12px;box-sizing:border-box;border:1px solid #25255a;background:#fff;"></div>
<div style="position:absolute;left:166px;top:491px;width:6px;height:6px;background:#6767d0;"></div>
<div style="position:absolute;left:177px;top:484px;width:1px;height:21px;background:repeating-linear-gradient(to bottom,#d4d4d4 0 1px,transparent 1px 2px);"></div>
<div style="position:absolute;left:373px;top:488px;width:12px;height:12px;box-sizing:border-box;border:1px solid #25255a;background:#fff;"></div>
<div style="position:absolute;left:376px;top:491px;width:6px;height:6px;background:#6767d0;"></div>
<div style="position:absolute;left:387px;top:484px;width:1px;height:21px;background:repeating-linear-gradient(to bottom,#d4d4d4 0 1px,transparent 1px 2px);"></div>
<div style="position:absolute;left:473px;top:488px;width:12px;height:12px;box-sizing:border-box;border:1px solid #25255a;background:#fff;"></div>
<div style="position:absolute;left:476px;top:491px;width:6px;height:6px;background:#6767d0;"></div>
<div style="position:absolute;left:487px;top:484px;width:1px;height:21px;background:repeating-linear-gradient(to bottom,#d4d4d4 0 1px,transparent 1px 2px);"></div>
<svg style="position:absolute;left:575px;top:491px" width="9" height="9" viewBox="0 0 9 9"><path d="M8 0.6L1.2 3.2L8 5.8" fill="none" stroke="#1c1c5c" stroke-width="1.2"/><rect x="0" y="7" width="8" height="1.1" fill="#1c1c5c"/></svg>
<div style="position:absolute;left:587px;top:484px;width:1px;height:21px;background:repeating-linear-gradient(to bottom,#d4d4d4 0 1px,transparent 1px 2px);"></div>
<svg style="position:absolute;left:695px;top:491px" width="9" height="9" viewBox="0 0 9 9"><path d="M8 0.6L1.2 3.2L8 5.8" fill="none" stroke="#1c1c5c" stroke-width="1.2"/><rect x="0" y="7" width="8" height="1.1" fill="#1c1c5c"/></svg>
<div style="position:absolute;left:707px;top:484px;width:1px;height:21px;background:repeating-linear-gradient(to bottom,#d4d4d4 0 1px,transparent 1px 2px);"></div>
<svg style="position:absolute;left:815px;top:491px" width="9" height="9" viewBox="0 0 9 9"><path d="M8 0.6L1.2 3.2L8 5.8" fill="none" stroke="#1c1c5c" stroke-width="1.2"/><rect x="0" y="7" width="8" height="1.1" fill="#1c1c5c"/></svg>
<div style="position:absolute;left:827px;top:484px;width:1px;height:21px;background:repeating-linear-gradient(to bottom,#d4d4d4 0 1px,transparent 1px 2px);"></div>
<svg style="position:absolute;left:935px;top:491px" width="9" height="9" viewBox="0 0 9 9"><path d="M8 0.6L1.2 3.2L8 5.8" fill="none" stroke="#1c1c5c" stroke-width="1.2"/><rect x="0" y="7" width="8" height="1.1" fill="#1c1c5c"/></svg>
<div style="position:absolute;left:947px;top:484px;width:1px;height:21px;background:repeating-linear-gradient(to bottom,#d4d4d4 0 1px,transparent 1px 2px);"></div>
<svg style="position:absolute;left:1055px;top:491px" width="9" height="9" viewBox="0 0 9 9"><path d="M8 0.6L1.2 3.2L8 5.8" fill="none" stroke="#1c1c5c" stroke-width="1.2"/><rect x="0" y="7" width="8" height="1.1" fill="#1c1c5c"/></svg>
<div style="position:absolute;left:1067px;top:484px;width:1px;height:21px;background:repeating-linear-gradient(to bottom,#d4d4d4 0 1px,transparent 1px 2px);"></div>
<div style="position:absolute;left:165px;top:510px;white-space:nowrap;font-family:'Liberation Sans', sans-serif;font-size:12px;font-weight:bold;letter-spacing:-0.5px;color:#000;">Số dư đầu kỳ</div>
<div style="position:absolute;left:375px;top:510px;white-space:nowrap;font-family:'Liberation Sans', sans-serif;font-size:12px;font-weight:bold;letter-spacing:-0.5px;color:#000;">632</div>
<div style="position:absolute;left:-20px;top:532px;white-space:nowrap;font-family:'Liberation Sans', sans-serif;font-size:12px;letter-spacing:-0.5px;color:#000;width:42px;text-align:right;">2023</div>
<div style="position:absolute;left:53px;top:532px;white-space:nowrap;font-family:'Liberation Sans', sans-serif;font-size:12px;letter-spacing:-0.5px;color:#000;color:#0000ee;text-decoration:underline;">0122103</div>
<div style="position:absolute;left:165px;top:532px;white-space:nowrap;font-family:'Liberation Sans', sans-serif;font-size:12px;letter-spacing:-0.5px;color:#000;">Áo sơ mi</div>
<div style="position:absolute;left:375px;top:532px;white-space:nowrap;font-family:'Liberation Sans', sans-serif;font-size:12px;letter-spacing:-0.5px;color:#000;">632</div>
<div style="position:absolute;left:476px;top:532px;white-space:nowrap;font-family:'Liberation Sans', sans-serif;font-size:12px;letter-spacing:-0.5px;color:#000;">1551</div>
<div style="position:absolute;left:569px;top:532px;white-space:nowrap;font-family:'Liberation Sans', sans-serif;font-size:12px;letter-spacing:-0.5px;color:#000;width:117px;text-align:right;">359.800,00</div>
<div style="position:absolute;left:689px;top:532px;white-space:nowrap;font-family:'Liberation Sans', sans-serif;font-size:12px;letter-spacing:-0.5px;color:#000;width:117px;text-align:right;">359.800</div>
<div style="position:absolute;left:809px;top:532px;white-space:nowrap;font-family:'Liberation Sans', sans-serif;font-size:12px;letter-spacing:-0.5px;color:#000;width:117px;text-align:right;">0,00</div>
<div style="position:absolute;left:929px;top:532px;white-space:nowrap;font-family:'Liberation Sans', sans-serif;font-size:12px;letter-spacing:-0.5px;color:#000;width:117px;text-align:right;">0</div>
<div style="position:absolute;left:165px;top:554px;white-space:nowrap;font-family:'Liberation Sans', sans-serif;font-size:12px;font-weight:bold;letter-spacing:-0.5px;color:#000;">Cộng</div>
<div style="position:absolute;left:375px;top:554px;white-space:nowrap;font-family:'Liberation Sans', sans-serif;font-size:12px;font-weight:bold;letter-spacing:-0.5px;color:#000;">632</div>
<div style="position:absolute;left:569px;top:554px;white-space:nowrap;font-family:'Liberation Sans', sans-serif;font-size:12px;font-weight:bold;letter-spacing:0.1px;color:#000;width:119px;text-align:right;">359.800,00</div>
<div style="position:absolute;left:689px;top:554px;white-space:nowrap;font-family:'Liberation Sans', sans-serif;font-size:12px;font-weight:bold;letter-spacing:0.1px;color:#000;width:119px;text-align:right;">359.800</div>
<div style="position:absolute;left:809px;top:554px;white-space:nowrap;font-family:'Liberation Sans', sans-serif;font-size:12px;font-weight:bold;letter-spacing:0.1px;color:#000;width:119px;text-align:right;">0,00</div>
<div style="position:absolute;left:929px;top:554px;white-space:nowrap;font-family:'Liberation Sans', sans-serif;font-size:12px;font-weight:bold;letter-spacing:0.1px;color:#000;width:119px;text-align:right;">0</div>
<div style="position:absolute;left:165px;top:576px;white-space:nowrap;font-family:'Liberation Sans', sans-serif;font-size:12px;font-weight:bold;letter-spacing:-0.5px;color:#000;">Số dư cuối kỳ</div>
<div style="position:absolute;left:375px;top:576px;white-space:nowrap;font-family:'Liberation Sans', sans-serif;font-size:12px;font-weight:bold;letter-spacing:-0.5px;color:#000;">632</div>
<div style="position:absolute;left:689px;top:528px;width:1px;height:18px;background:#fff;"></div>
<div style="position:absolute;left:569px;top:524px;width:241px;height:25px;box-sizing:border-box;border:3px solid #fe3d3d;"></div>
<svg style="position:absolute;left:0;top:0" width="1112" height="647"><path d="M846 505L1002 314" stroke="#fe3d3d" stroke-width="5.8" fill="none"/><path d="M1010 305L992 313L1006 324Z" fill="#fe3d3d"/><path d="M838 515L843 496L856 507Z" fill="#fe3d3d"/></svg>
</body></html>
